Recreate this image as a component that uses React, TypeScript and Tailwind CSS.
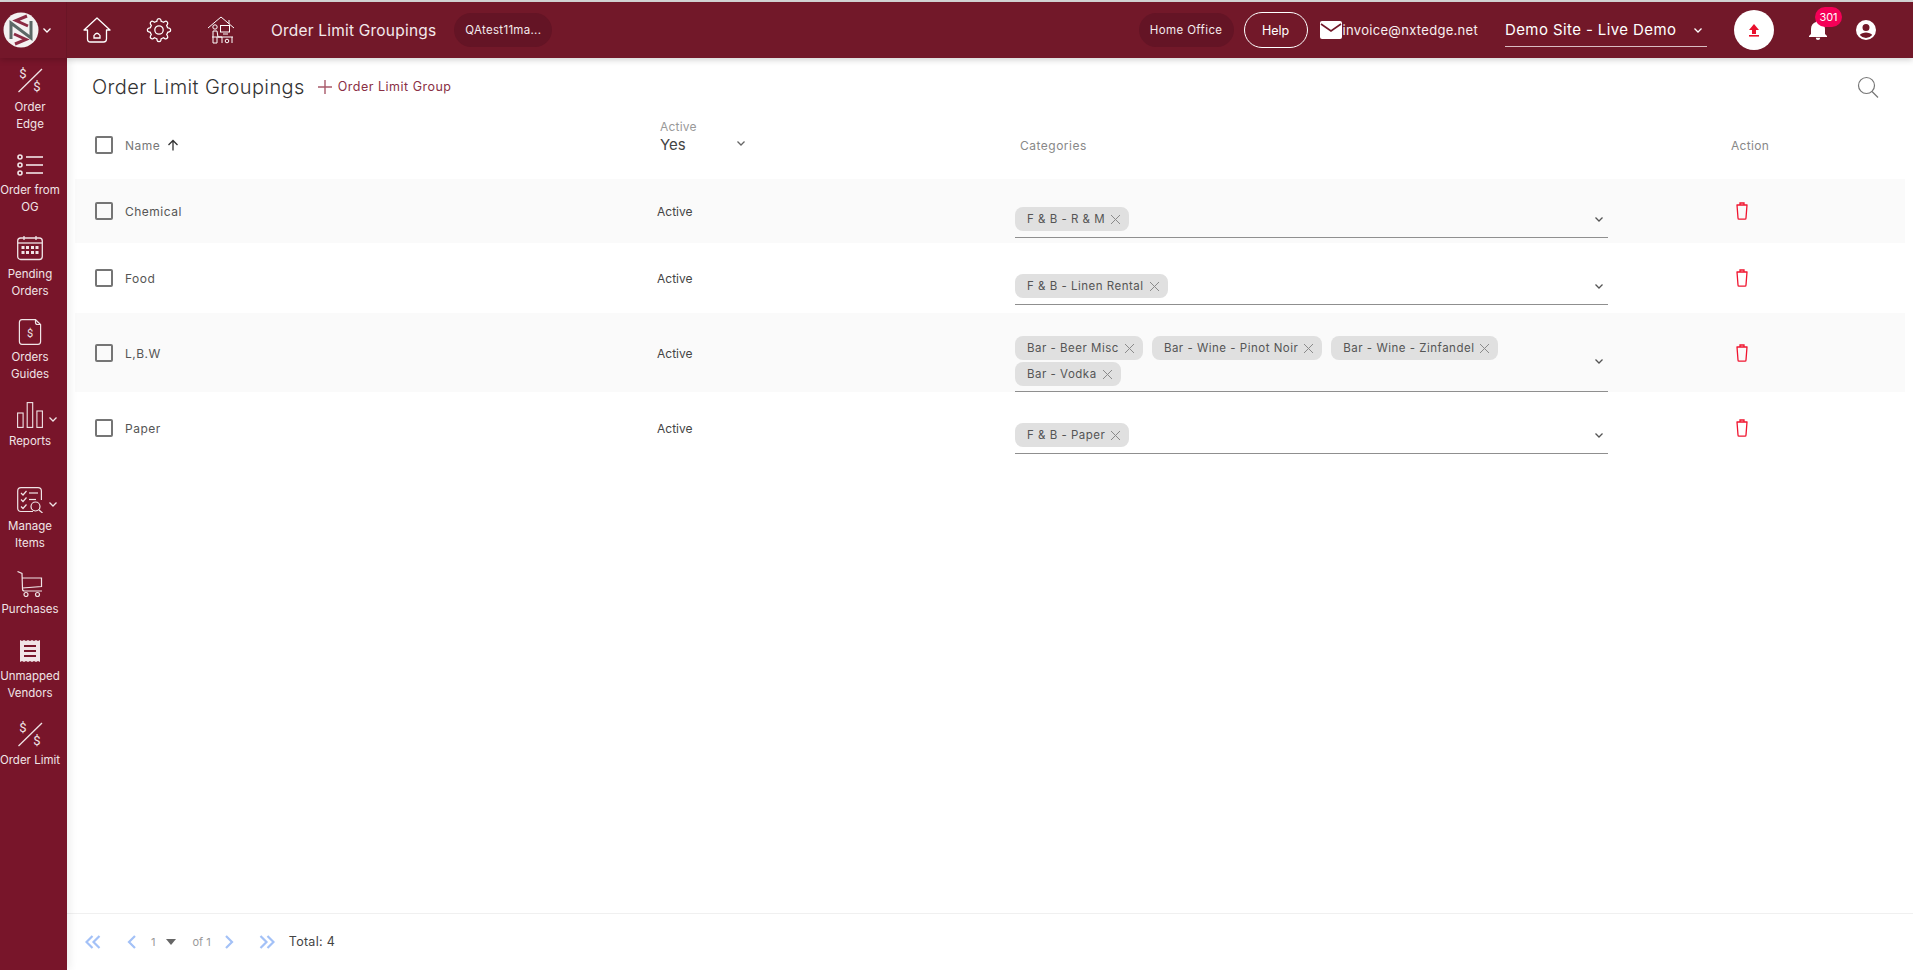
import { ReactNode } from "react";

const dollarSlash = (
  <svg className="overflow-visible" width="26" height="26" viewBox="0 0 26 26" fill="none" stroke="currentColor">
    <line x1="1.5" y1="25" x2="25" y2="2" strokeWidth="1.3" />
    <text x="6" y="11" fontSize="13" textAnchor="middle" fill="currentColor" stroke="none" fontFamily="Roboto, sans-serif">$</text>
    <text x="20" y="24" fontSize="13" textAnchor="middle" fill="currentColor" stroke="none" fontFamily="Roboto, sans-serif">$</text>
  </svg>
);

const listIcon = (
  <svg width="26" height="26" viewBox="0 0 26 26" fill="none" stroke="currentColor" strokeWidth="1.6">
    <circle cx="3" cy="5" r="2" />
    <circle cx="3" cy="13" r="2" />
    <circle cx="3" cy="21" r="2" />
    <line x1="9" y1="5" x2="26" y2="5" />
    <line x1="9" y1="13" x2="26" y2="13" />
    <line x1="9" y1="21" x2="26" y2="21" />
  </svg>
);

const calendarIcon = (
  <svg width="26" height="26" viewBox="0 0 26 26" fill="none" stroke="currentColor" strokeWidth="1.3">
    <rect x="0.7" y="3" width="24.6" height="21.5" rx="3" />
    <line x1="1" y1="8" x2="25" y2="8" />
    <line x1="7" y1="1" x2="7" y2="5" />
    <line x1="19" y1="1" x2="19" y2="5" />
    <g fill="currentColor" stroke="none">
      <rect x="4.5" y="11" width="3" height="3" /><rect x="9" y="11" width="3" height="3" /><rect x="14" y="11" width="3" height="3" /><rect x="18.5" y="11" width="3" height="3" />
      <rect x="4.5" y="16" width="3" height="3" /><rect x="9" y="16" width="3" height="3" /><rect x="14" y="16" width="3" height="3" /><rect x="18.5" y="16" width="3" height="3" />
    </g>
  </svg>
);

const guideIcon = (
  <svg width="26" height="26" viewBox="0 0 26 26" fill="none" stroke="currentColor" strokeWidth="1.2">
    <path d="M5 0.7 H18.5 L23.6 5.5 V22.5 Q23.6 25.3 21 25.3 H5 Q2.4 25.3 2.4 22.5 V3.5 Q2.4 0.7 5 0.7 Z" />
    <path d="M18.5 0.7 V3.5 Q18.5 5.5 20.5 5.5 H23.6" />
    <text x="13" y="18" fontSize="11" textAnchor="middle" fill="currentColor" stroke="none" fontFamily="Roboto, sans-serif">$</text>
  </svg>
);

const barsIcon = (
  <svg width="26" height="26" viewBox="0 0 26 26" fill="none" stroke="currentColor" strokeWidth="1.1">
    <rect x="0.6" y="11" width="5.5" height="14.4" />
    <rect x="10.2" y="0.6" width="5.5" height="24.8" />
    <rect x="19.9" y="9" width="5.5" height="16.4" />
  </svg>
);

const manageIcon = (
  <svg width="26" height="26" viewBox="0 0 26 26" fill="none" stroke="currentColor" strokeWidth="1.2">
    <path d="M16 24.5 H4 Q0.7 24.5 0.7 21 V4 Q0.7 0.7 4 0.7 H21 Q24.4 0.7 24.4 4 V13" />
    <path d="M4 6 L6 8 L9.5 4 M4 12.5 L6 14.5 L9.5 10.5 M4 19.5 L6 21.5 L9.5 17.5" />
    <line x1="12" y1="6" x2="21" y2="6" />
    <line x1="12" y1="12.5" x2="19" y2="12.5" />
    <circle cx="18.5" cy="19.5" r="4.5" />
    <line x1="22" y1="23" x2="25.5" y2="26" />
  </svg>
);

const cartIcon = (
  <svg width="26" height="26" viewBox="0 0 26 26" fill="none" stroke="currentColor" strokeWidth="1.2">
    <path d="M0.5 0.5 L5 2.5 L5.5 18 Q5.5 20 7.5 20 H25" />
    <path d="M5 7 H24.5 V15.5 L5.5 17" />
    <circle cx="9" cy="23.5" r="2" />
    <circle cx="20.5" cy="23.5" r="2" />
  </svg>
);

const receiptIcon = (
  <svg width="26" height="26" viewBox="0 0 26 26">
    <path fill="currentColor" fillRule="evenodd" d="M3 2 L5 3 L7 2 L9 3 L11 2 L13 3 L15 2 L17 3 L19 2 L21 3 L23 2 V24 L21 23 L19 24 L17 23 L15 24 L13 23 L11 24 L9 23 L7 24 L5 23 L3 24 Z M7 7 V9 H19 V7 Z M7 12 V14 H19 V12 Z M7 17 V19 H19 V17 Z" />
  </svg>
);

const smallChevron = (
  <svg width="10" height="10" viewBox="0 0 10 10" fill="none" stroke="currentColor" strokeWidth="1.3">
    <path d="M1.5 3.5 L5 7 L8.5 3.5" />
  </svg>
);

const navItems: { icon: ReactNode; lines: string[]; itemClass: string; more?: boolean }[] = [
  { icon: dollarSlash, lines: ["Order", "Edge"], itemClass: "h-[85px] gap-[6px]" },
  { icon: listIcon, lines: ["Order from", "OG"], itemClass: "h-[83px] gap-[4px]" },
  { icon: calendarIcon, lines: ["Pending", "Orders"], itemClass: "h-[84px] gap-[5px]" },
  { icon: guideIcon, lines: ["Orders", "Guides"], itemClass: "h-[83px] gap-[4px]" },
  { icon: barsIcon, lines: ["Reports"], itemClass: "h-[85px] gap-[5px]", more: true },
  { icon: manageIcon, lines: ["Manage", "Items"], itemClass: "h-[84px] gap-[5px]", more: true },
  { icon: cartIcon, lines: ["Purchases"], itemClass: "h-[67px] gap-[4px]" },
  { icon: receiptIcon, lines: ["Unmapped", "Vendors"], itemClass: "h-[83px] gap-[4px]" },
  { icon: dollarSlash, lines: ["Order Limit"], itemClass: "h-[60px] gap-[5px]" },
];

const rows = [
  { name: "Chemical", cats: ["F & B - R & M"], rowClass: "h-[64px] bg-[#fafafa]", selClass: "h-[59px] mb-[5px] pb-[6px]" },
  { name: "Food", cats: ["F & B - Linen Rental"], rowClass: "h-[70px] bg-white", selClass: "h-[62px] mb-[8px] pb-[6px]" },
  { name: "L,B.W", cats: ["Bar - Beer Misc", "Bar - Wine - Pinot Noir", "Bar - Wine - Zinfandel", "Bar - Vodka"], rowClass: "h-[79px] bg-[#fafafa]", selClass: "h-[78px] pb-[5px]" },
  { name: "Paper", cats: ["F & B - Paper"], rowClass: "h-[71px] bg-white", selClass: "h-[62px] mb-[9px] pb-[6px]" },
];

function Checkbox() {
  return <span className="block h-[18px] w-[18px] shrink-0 rounded-[2px] border-2 border-[#757575]" />;
}

function Chip({ label }: { label: string }) {
  return (
    <span className="flex h-6 items-center gap-[5px] rounded-lg bg-[#e0e0e0] pl-[12px] pr-[8px] text-[11.5px] tracking-[0.5px] text-[#555]">
      <span className="pt-px">{label}</span>
      <svg width="11" height="11" viewBox="0 0 11 11" stroke="#8a8a8a" strokeWidth="1">
        <path d="M1 1 L10 10 M10 1 L1 10" />
      </svg>
    </span>
  );
}

function Trash() {
  return (
    <svg width="14" height="18" viewBox="0 0 14 18" fill="none" stroke="#f0142f" strokeWidth="1.3">
      <path d="M1.5 3 H12.5 M2 3 L3 16 Q3 17.2 4 17.2 H10 Q11 17.2 11 16 L12 3 M5 3 V1 H9 V3" />
    </svg>
  );
}

export default function App() {
  return (
    <div className="flex h-[970px] w-[1913px] flex-col overflow-hidden bg-white font-['Inter',sans-serif] text-[12px] text-[#444]">
      <div className="h-[2px] bg-[#d8d8d8]" />

      {/* top bar */}
      <header className="relative z-20 flex h-[56px] shrink-0 items-center bg-[#721829] text-white shadow-[0_2px_6px_rgba(0,0,0,0.18)]">
        <div className="flex h-full w-[67px] shrink-0 items-center border-r border-[#6a1526] bg-[#74172a] pl-[3px]">
          <svg width="36" height="36" viewBox="0 0 36 36" fill="none">
            <circle cx="18" cy="18" r="17.5" fill="#f4f1f1" />
            <path d="M8 27 V11 L28 26 V9" stroke="#5c6866" strokeWidth="3" />
            <path d="M24 4 L13 8.5 L25 14 M12 32 L23 27.5 L11 22" stroke="#8c2b44" strokeWidth="3" />
          </svg>
          <span className="ml-[3px]">{smallChevron}</span>
        </div>

        <svg className="ml-[16px]" width="28" height="28" viewBox="0 0 28 28" fill="none" stroke="currentColor" strokeWidth="1.3">
          <path d="M1 14 L14 2 L27 14 H23.5 V23 Q23.5 26 20.5 26 H7.5 Q4.5 26 4.5 23 V14 Z" strokeLinejoin="round" />
          <path d="M11 22 V19.5 Q14 15 17 19.5 V22 Z" />
        </svg>
        <svg className="ml-[34px]" width="28" height="28" viewBox="0 0 24 24" fill="none" stroke="currentColor" strokeWidth="1.1">
          <path d="M12 22a1.7 1.7 0 0 1-1.6-1.2l-.3-1.3a7.7 7.7 0 0 1-1.9-.8l-1.2.7a1.7 1.7 0 0 1-2-.3 1.7 1.7 0 0 1-.3-2l.7-1.2a7.7 7.7 0 0 1-.8-1.9l-1.3-.3a1.7 1.7 0 0 1 0-3.3l1.3-.3a7.7 7.7 0 0 1 .8-1.9l-.7-1.2a1.7 1.7 0 0 1 .3-2 1.7 1.7 0 0 1 2-.3l1.2.7a7.7 7.7 0 0 1 1.9-.8l.3-1.3a1.7 1.7 0 0 1 3.2 0l.3 1.3a7.7 7.7 0 0 1 1.9.8l1.2-.7a1.7 1.7 0 0 1 2 .3 1.7 1.7 0 0 1 .3 2l-.7 1.2a7.7 7.7 0 0 1 .8 1.9l1.3.3a1.7 1.7 0 0 1 0 3.3l-1.3.3a7.7 7.7 0 0 1-.8 1.9l.7 1.2a1.7 1.7 0 0 1-.3 2 1.7 1.7 0 0 1-2 .3l-1.2-.7a7.7 7.7 0 0 1-1.9.8l-.3 1.3A1.7 1.7 0 0 1 12 22Z" />
          <circle cx="12" cy="12" r="3.6" />
        </svg>
        <svg className="ml-[34px]" width="28" height="28" viewBox="0 0 28 28" fill="none" stroke="#fff" strokeWidth="1">
          <path d="M1 12 L14 1 L27 12 M22 4 V8" />
          <circle cx="8" cy="11" r="2.2" />
          <path d="M6 15 H10 L11 21 H15 M6 15 V27 M10 21 V27 M6 27 H10" />
          <rect x="13.5" y="9.5" width="9" height="6.5" />
          <path d="M16 18 H21 M5 21 H26 M25 21 V27 M15 21 V27" />
          <circle cx="20" cy="25" r="1.8" />
        </svg>

        <span className="ml-[36px] pt-px text-[15.5px] tracking-[0.2px] text-[#f3e9eb]">Order Limit Groupings</span>
        <span className="ml-[18px] flex h-[34px] w-[98px] items-center justify-center rounded-full bg-[#641425] pt-[2px] text-[11.5px] tracking-[0.3px] text-[#f3e9eb]">QAtest11ma...</span>

        <span className="ml-auto flex h-[34px] w-[95px] items-center justify-center rounded-full bg-[#641425] pt-[2px] text-[11.5px] tracking-[0.4px] text-[#f3e9eb]">Home Office</span>
        <span className="ml-[10px] flex h-[36px] w-[64px] items-center justify-center rounded-full border border-white pt-[2px] text-[12.5px]">Help</span>
        <svg className="ml-[12px]" width="22" height="18" viewBox="0 0 22 18">
          <path fill="#fff" d="M2 0 H20 Q22 0 22 2 V16 Q22 18 20 18 H2 Q0 18 0 16 V2 Q0 0 2 0 Z" />
          <path fill="none" stroke="#721829" strokeWidth="1.6" d="M1 3 L11 10 L21 3" />
        </svg>
        <span className="ml-px pt-[2px] text-[13px] tracking-[0.3px] text-[#f7eff0]">invoice@nxtedge.net</span>

        <div className="ml-[27px] flex h-[34px] w-[202px] items-center justify-between border-b border-[#d9bcc2] pr-[4px]">
          <span className="pt-px text-[15px] tracking-[0.4px]">Demo Site - Live Demo</span>
          {smallChevron}
        </div>

        <span className="ml-[27px] flex h-10 w-10 items-center justify-center rounded-full bg-white">
          <svg width="12" height="13" viewBox="0 0 12 13" fill="#e8112d">
            <path d="M6 0 L11 6 H8 V10 H4 V6 H1 Z" />
            <rect x="1" y="11" width="10" height="1.6" />
          </svg>
        </span>

        <div className="relative ml-[32px] h-6 w-6">
          <svg width="24" height="24" viewBox="0 0 24 24" fill="#fff">
            <path d="M12 22a2.2 2.2 0 0 0 2.2-2.2H9.8A2.2 2.2 0 0 0 12 22Zm7-6v-5c0-3.4-1.9-6.2-5-7V3.2a2 2 0 0 0-4 0V4c-3.1.8-5 3.6-5 7v5l-2 2v1h18v-1Z" />
          </svg>
          <span className="absolute left-[9px] top-[-11px] flex h-[20px] w-[27px] items-center justify-center rounded-full bg-[#f50057] text-[11px] text-white">301</span>
        </div>

        <svg className="ml-[24px] mr-[35px]" width="24" height="24" viewBox="0 0 24 24" fill="#fff">
          <path d="M12 2a10 10 0 1 0 0 20 10 10 0 0 0 0-20Zm0 4a3.5 3.5 0 1 1 0 7 3.5 3.5 0 0 1 0-7Zm0 14a8 8 0 0 1-6.2-3c.7-1.7 4-2.6 6.2-2.6s5.5.9 6.2 2.6A8 8 0 0 1 12 20Z" />
        </svg>
      </header>

      <div className="flex min-h-0 flex-1">
        {/* left nav */}
        <nav className="relative z-10 w-[67px] shrink-0 bg-[#78152a] pr-[7px] pt-[9px] text-[#f0e4e6] shadow-[3px_0_8px_rgba(0,0,0,0.07)]">
          {navItems.map((item, i) => (
            <div key={i} className={`relative flex flex-col items-center ${item.itemClass}`}>
              <span className="h-[26px] w-[26px] shrink-0">{item.icon}</span>
              <span className="whitespace-nowrap text-center text-[11.5px] leading-[16.5px]">
                {item.lines.map((l) => (
                  <span key={l} className="block">{l}</span>
                ))}
              </span>
              {item.more && <span className="absolute left-[48px] top-[12px]">{smallChevron}</span>}
            </div>
          ))}
        </nav>

        {/* content */}
        <main className="flex min-w-0 flex-1 flex-col">
          <div className="flex-1 pl-2 pr-2">
            <div className="flex h-[58px] items-center pl-[17px] pr-[26px]">
              <h1 className="text-[20px] font-light tracking-[0.4px] text-[#333]">Order Limit Groupings</h1>
              <svg className="ml-[13px]" width="14" height="14" viewBox="0 0 14 14" stroke="#a8596a" strokeWidth="1.4">
                <path d="M7 0 V14 M0 7 H14" />
              </svg>
              <span className="ml-[6px] text-[12.5px] tracking-[0.5px] text-[#8a3045]">Order Limit Group</span>
              <svg className="ml-auto" width="22" height="22" viewBox="0 0 22 22" fill="none" stroke="#777" strokeWidth="1.2">
                <circle cx="9.5" cy="9.5" r="8" />
                <line x1="15" y1="15.5" x2="21" y2="21.5" />
              </svg>
            </div>

            <div className="grid h-[63px] grid-cols-[582px_358px_593px_1fr] items-center pb-[5px] text-[#777]">
              <div className="flex items-center gap-[12px] pl-[20px]">
                <Checkbox />
                <span className="mt-[2px] text-[12px] tracking-[0.5px]">Name</span>
                <svg className="-ml-[5px]" width="12" height="12" viewBox="0 0 12 12" fill="none" stroke="#333" strokeWidth="1.3">
                  <path d="M6 11.5 V1.5 M1.5 6 L6 1.5 L10.5 6" />
                </svg>
              </div>
              <div className="-mt-[14px] pl-[3px]">
                <div className="text-[12px] leading-[14px] tracking-[0.2px] text-[#999]">Active</div>
                <div className="flex items-center text-[15px] leading-[22px] text-[#444]">
                  Yes
                  <span className="-mt-[4px] ml-[50px] text-[#666]">{smallChevron}</span>
                </div>
              </div>
              <div className="mt-[2px] pl-[5px] text-[12px] tracking-[0.5px] text-[#888]">Categories</div>
              <div className="mt-[2px] pl-[123px] text-[12px] tracking-[0.3px] text-[#888]">Action</div>
            </div>

            {rows.map((row) => (
              <div key={row.name} className={`grid grid-cols-[582px_358px_593px_1fr] items-center ${row.rowClass}`}>
                <div className="flex items-center gap-[12px] pl-[20px]">
                  <Checkbox />
                  <span className="mt-[2px] text-[12px] tracking-[0.5px] text-[#555]">{row.name}</span>
                </div>
                <span className="mt-[2px] text-[12px] text-[#444]">Active</span>
                <div className={`flex items-end self-end border-b border-[#8f8f8f] ${row.selClass}`}>
                  <div className="flex flex-1 items-center">
                    <div className="flex flex-1 flex-wrap gap-x-[9px] gap-y-[2px]">
                      {row.cats.map((c) => (
                        <Chip key={c} label={c} />
                      ))}
                    </div>
                    <span className="mr-[4px] text-[#555]">{smallChevron}</span>
                  </div>
                </div>
                <div className="pl-[127px]">
                  <Trash />
                </div>
              </div>
            ))}
          </div>

          {/* pagination */}
          <footer className="flex h-[57px] shrink-0 items-center border-t border-[#f0f0f0] pl-[18px] text-[#999]">
            <svg width="16" height="14" viewBox="0 0 16 14" fill="none" stroke="#a3c1f7" strokeWidth="2.2">
              <path d="M7.5 1 L1.5 7 L7.5 13 M14.5 1 L8.5 7 L14.5 13" />
            </svg>
            <svg className="ml-[26px]" width="9" height="14" viewBox="0 0 9 14" fill="none" stroke="#a3c1f7" strokeWidth="2.2">
              <path d="M8 1 L2 7 L8 13" />
            </svg>
            <span className="ml-[15px] text-[11px]">1</span>
            <svg className="ml-[11px]" width="10" height="6" viewBox="0 0 10 6" fill="#666">
              <path d="M0 0 H10 L5 6 Z" />
            </svg>
            <span className="ml-[16px] text-[11px]">of 1</span>
            <svg className="ml-[14px]" width="9" height="14" viewBox="0 0 9 14" fill="none" stroke="#a3c1f7" strokeWidth="2.2">
              <path d="M1 1 L7 7 L1 13" />
            </svg>
            <svg className="ml-[25px]" width="16" height="14" viewBox="0 0 16 14" fill="none" stroke="#a3c1f7" strokeWidth="2.2">
              <path d="M1.5 1 L7.5 7 L1.5 13 M8.5 1 L14.5 7 L8.5 13" />
            </svg>
            <span className="ml-[14px] text-[12.5px] tracking-[0.3px] text-[#444]">Total: 4</span>
          </footer>
        </main>
      </div>
    </div>
  );
}
